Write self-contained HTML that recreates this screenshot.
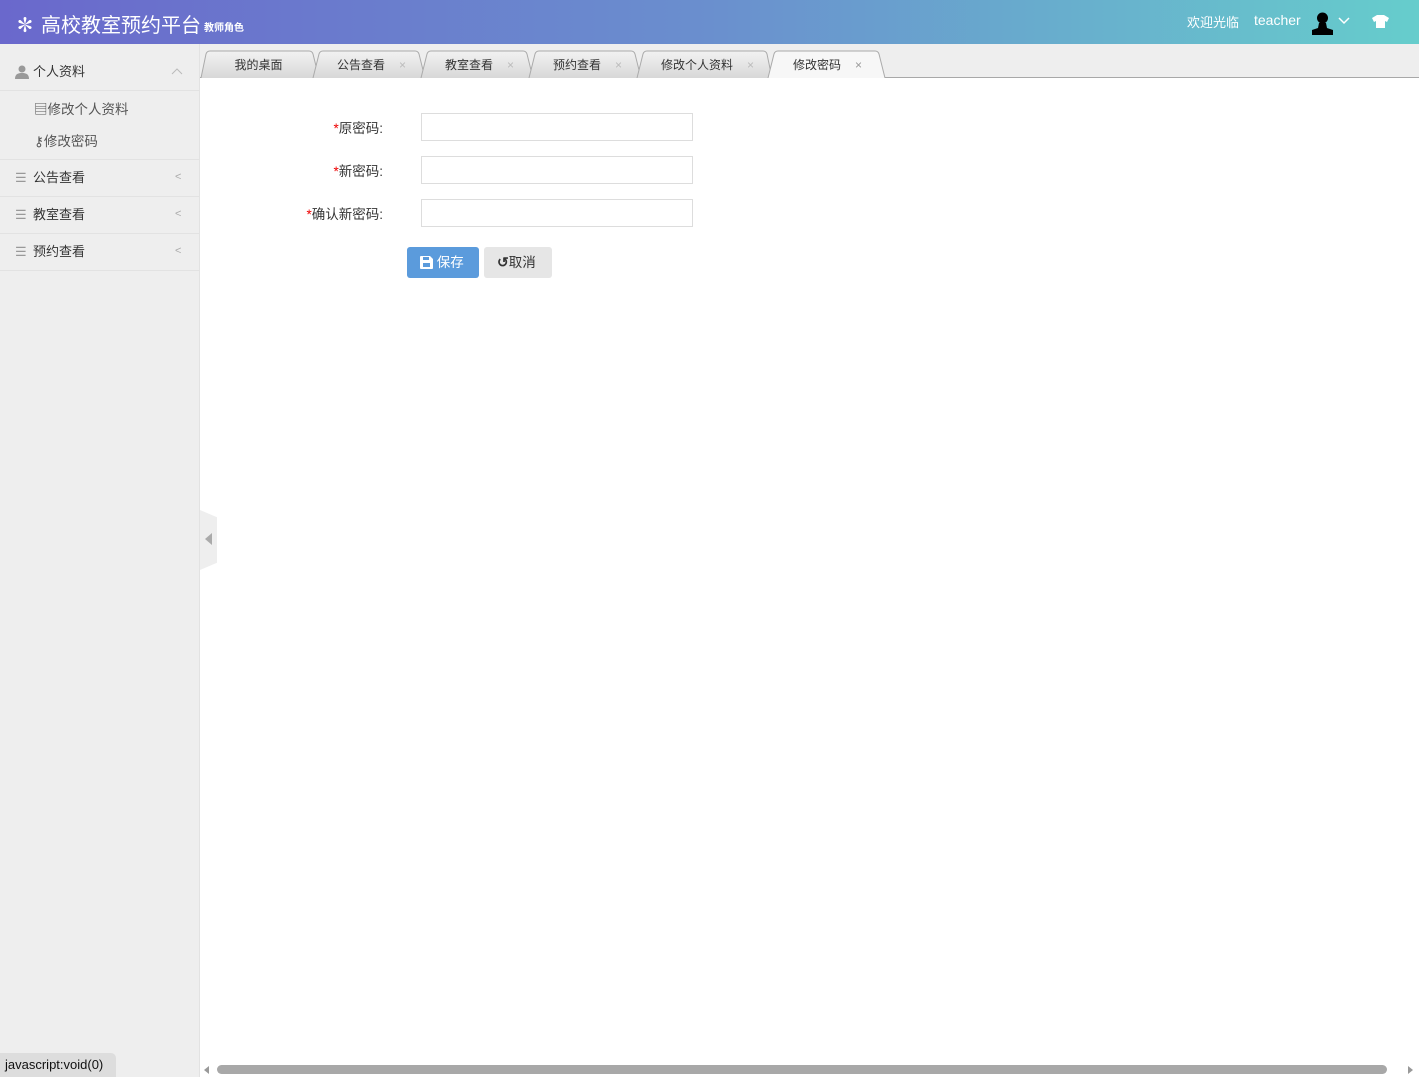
<!DOCTYPE html>
<html><head><meta charset="utf-8"><style>
*{margin:0;padding:0;box-sizing:border-box}
body{width:1419px;height:1077px;overflow:hidden;font-family:"Liberation Sans","Noto Sans CJK SC",sans-serif;font-size:13px;color:#333;background:#fff;position:relative}
.hdr{position:absolute;left:0;top:0;width:1419px;height:44px;background:linear-gradient(90deg,#6a68cc,#6a8fce 50%,#66cdcc);color:#fff}
.side{position:absolute;left:0;top:44px;width:200px;height:1033px;background:#eee;border-right:1px solid #e2e2e2}
.mi{height:37px;border-bottom:1px solid #e2e2e2;position:relative;line-height:35px;padding-left:33px;font-size:13px;color:#333}
.sub{height:32px;line-height:32px;padding-left:48px;color:#555}
.tabbar{position:absolute;left:200px;top:44px;width:1219px;height:34px;background:#eee;border-bottom:1px solid #a8a8a8}
.tab{position:absolute;top:8px;height:27px;font-size:12px;line-height:27px;text-align:center;color:#333}
.tab span.x{position:absolute;color:#bbb;font-size:12px}
label{position:absolute;text-align:right;width:120px;font-size:13.5px;color:#333}
label b{color:#e00;font-weight:normal}
.in{position:absolute;left:421px;width:272px;height:28px;border:1px solid #ddd;background:#fff}
</style></head><body>
<div class="hdr">
<div style="position:absolute;left:15px;top:9px;font-size:20px;font-weight:bold">✽</div>
<div style="position:absolute;left:41px;top:9px;font-size:20px;">高校教室预约平台</div>
<div style="position:absolute;left:204px;top:19px;font-size:10px;font-weight:bold;">教师角色</div>
<div style="position:absolute;left:1187px;top:12px;font-size:13px;">欢迎光临</div>
<div style="position:absolute;left:1254px;top:12px;font-size:14px;">teacher</div>
<svg style="position:absolute;left:1311px;top:11px" width="23" height="24" viewBox="0 0 23 24"><circle cx="11.5" cy="7" r="5.5" fill="#000"/><path d="M8 12h7l1 5 6 2v5H1v-5l6-2z" fill="#000"/></svg>
<svg style="position:absolute;left:1338px;top:17px" width="12" height="8"><path d="M1 1l5 5 5-5" stroke="#fff" stroke-width="1.5" fill="none"/></svg>
<svg style="position:absolute;left:1372px;top:15px" width="17" height="13" viewBox="0 0 17 13"><path d="M5 0h7l5 3-2 4-2-1v7H4V6L2 7 0 3z" fill="#fff"/></svg>
</div>
<div class="side">
<div class="mi" style="height:47px;line-height:56px;padding-left:33px">
<svg style="position:absolute;left:15px;top:21px" width="14" height="14" viewBox="0 0 14 14"><circle cx="7" cy="4" r="3.5" fill="#999"/><path d="M0 14c0-5 3-6 7-6s7 1 7 6z" fill="#999"/></svg>个人资料
<svg style="position:absolute;left:171px;top:24px" width="12" height="7"><path d="M1 6l5-5 5 5" stroke="#bbb" fill="none"/></svg></div>
<div style="border-bottom:1px solid #e2e2e2;padding:3px 0 1px">
<div class="sub" style="padding-left:34px;font-size:13.5px">▤修改个人资料</div>
<div class="sub" style="padding-left:34px;font-size:13.5px">⚷修改密码</div>
</div>
<div class="mi"><span style="position:absolute;left:15px;color:#999">☰</span>公告查看<span style="position:absolute;left:175px;color:#aaa;font-size:11px">&lt;</span></div>
<div class="mi"><span style="position:absolute;left:15px;color:#999">☰</span>教室查看<span style="position:absolute;left:175px;color:#aaa;font-size:11px">&lt;</span></div>
<div class="mi"><span style="position:absolute;left:15px;color:#999">☰</span>预约查看<span style="position:absolute;left:175px;color:#aaa;font-size:11px">&lt;</span></div>
<div style="position:absolute;left:0;top:1009px;width:116px;height:24px;background:#ddd;border-radius:0 5px 0 0;font-size:13px;line-height:24px;padding-left:5px;color:#111">javascript:void(0)</div>
</div>
<div class="tabbar">
<svg style="position:absolute;left:0;top:0" width="700" height="34">
<defs><linearGradient id="g" x1="0" y1="0" x2="0" y2="1"><stop offset="0" stop-color="#f2f2f2"/><stop offset="1" stop-color="#d8d8d8"/></linearGradient></defs>
<g stroke="#aaa" fill="url(#g)">
<path d="M1 34L6 10q1-3 4-3h99q3 0 4 3l6 24"/>
<path d="M113 34L119 10q1-3 4-3h92q3 0 4 3l6 24"/>
<path d="M221 34L227 10q1-3 4-3h92q3 0 4 3l6 24"/>
<path d="M329 34L335 10q1-3 4-3h92q3 0 4 3l6 24"/>
<path d="M437 34L443 10q1-3 4-3h116q3 0 4 3l5 24"/>
</g>
<path d="M568 34L574 10q1-3 4-3h97q3 0 4 3l6 24" stroke="#aaa" fill="#f7f7f7"/>
</svg>
<div class="tab" style="left:6px;width:105px">我的桌面</div>
<div class="tab" style="left:121px;text-align:left;padding-left:16px">公告查看<span class="x" style="left:78px">×</span></div>
<div class="tab" style="left:229px;text-align:left;padding-left:16px">教室查看<span class="x" style="left:78px">×</span></div>
<div class="tab" style="left:337px;text-align:left;padding-left:16px">预约查看<span class="x" style="left:78px">×</span></div>
<div class="tab" style="left:445px;text-align:left;padding-left:16px">修改个人资料<span class="x" style="left:102px">×</span></div>
<div class="tab" style="left:577px;text-align:left;padding-left:16px">修改密码<span class="x" style="left:78px;color:#999">×</span></div>
</div>
<label style="left:263px;top:117px"><b>*</b>原密码:</label>
<label style="left:263px;top:160px"><b>*</b>新密码:</label>
<label style="left:263px;top:203px"><b>*</b>确认新密码:</label>
<div class="in" style="top:113px"></div>
<div class="in" style="top:156px"></div>
<div class="in" style="top:199px"></div>
<div style="position:absolute;left:407px;top:247px;width:72px;height:31px;background:#5b9bdc;border-radius:3px;color:#fff;line-height:31px;font-size:13.5px;padding-left:13px">
<svg style="vertical-align:-2px" width="13" height="13" viewBox="0 0 13 13"><path d="M0 1q0-1 1-1h9l3 3v9q0 1-1 1H1q-1 0-1-1z" fill="#fff"/><rect x="3" y="1" width="6" height="3" fill="#5b9bdc"/><rect x="3" y="7" width="7" height="4" fill="#5b9bdc"/></svg> 保存</div>
<div style="position:absolute;left:484px;top:247px;width:68px;height:31px;background:#e6e6e6;border-radius:3px;color:#333;line-height:31px;font-size:13.5px;padding-left:13px"><b style="font-size:14px">↺</b>取消</div>
<div style="position:absolute;left:200px;top:510px;width:17px;height:60px;background:#eee;clip-path:polygon(0 0,100% 12%,100% 88%,0 100%)"></div>
<div style="position:absolute;left:205px;top:533px;width:0;height:0;border-top:6px solid transparent;border-bottom:6px solid transparent;border-right:7px solid #aaa"></div>
<div style="position:absolute;left:204px;top:1066px;border-top:4px solid transparent;border-bottom:4px solid transparent;border-right:5px solid #999"></div>
<div style="position:absolute;left:217px;top:1065px;width:1170px;height:9px;background:#a8a8a8;border-radius:5px"></div>
<div style="position:absolute;left:1408px;top:1066px;border-top:4px solid transparent;border-bottom:4px solid transparent;border-left:5px solid #999"></div>
</body></html>
